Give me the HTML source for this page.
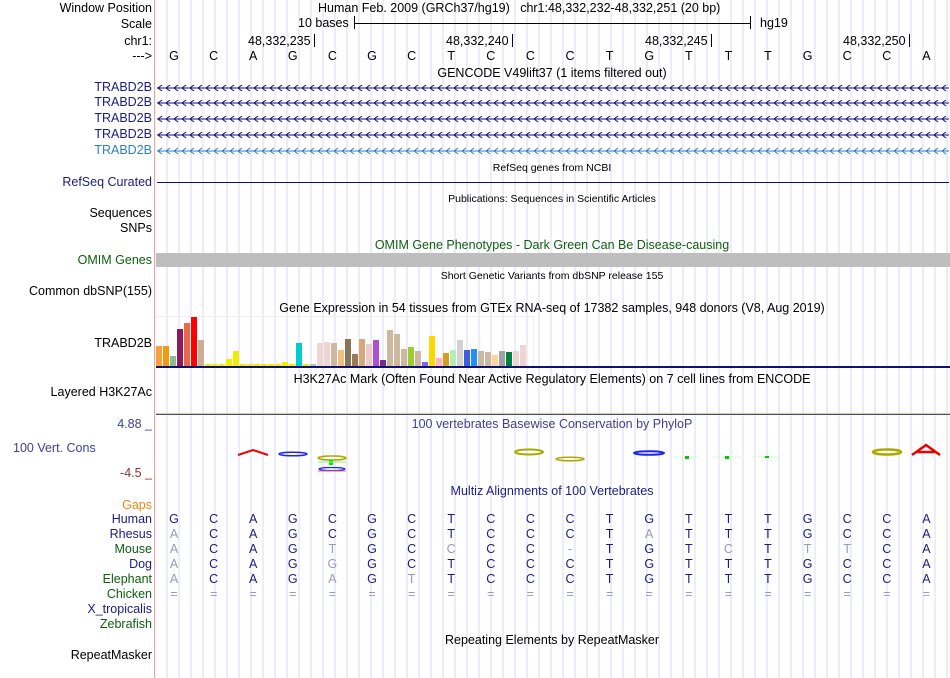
<!DOCTYPE html>
<html><head><meta charset="utf-8"><style>
html,body{margin:0;padding:0;width:950px;height:678px;overflow:hidden;background:#fff;}
body{position:relative;font-family:"Liberation Sans",sans-serif;font-size:12.5px;color:#000;}
#grid{position:absolute;left:156px;top:0;width:794px;height:678px;
background:repeating-linear-gradient(to right,transparent 0,transparent 10.5px,#d8d8f4 10.5px,#d8d8f4 11.5px,transparent 11.5px,transparent 12px);}
#red{position:absolute;left:154px;top:0;width:1px;height:678px;background:#f4a0a0;}
.t{position:absolute;white-space:nowrap;line-height:14px;}
.l{position:absolute;right:798px;white-space:nowrap;line-height:14px;text-align:right;}
.c{position:absolute;white-space:nowrap;line-height:14px;transform:translateX(-50%);}
.hl{position:absolute;left:157px;width:792px;}
.arr{position:absolute;left:157px;width:792px;height:8px;}
</style></head><body>
<div id="grid"></div><div id="red"></div>

<div class="l" style="top:1px">Window Position</div>
<div class="l" style="top:17px">Scale</div>
<div class="l" style="top:34px">chr1:</div>
<div class="l" style="top:49px">---&gt;</div>

<div class="t" style="left:318px;top:1px">Human Feb. 2009 (GRCh37/hg19)&nbsp;&nbsp; chr1:48,332,232-48,332,251 (20 bp)</div>
<div class="t" style="left:298px;top:16px">10 bases</div>
<div style="position:absolute;left:354px;top:16px;width:1px;height:13px;background:#000"></div>
<div style="position:absolute;left:354px;top:23px;width:397px;height:1px;background:#000"></div>
<div style="position:absolute;left:750px;top:16px;width:1px;height:13px;background:#000"></div>
<div class="t" style="left:760px;top:16px">hg19</div>

<div class="t" style="left:248px;top:34px">48,332,235</div><div style="position:absolute;left:314px;top:34px;width:1px;height:13px;background:#000"></div>
<div class="t" style="left:446px;top:34px">48,332,240</div><div style="position:absolute;left:512px;top:34px;width:1px;height:13px;background:#000"></div>
<div class="t" style="left:645px;top:34px">48,332,245</div><div style="position:absolute;left:711px;top:34px;width:1px;height:13px;background:#000"></div>
<div class="t" style="left:843px;top:34px">48,332,250</div><div style="position:absolute;left:909px;top:34px;width:1px;height:13px;background:#000"></div>
<div id="bases"></div>

<div class="c" style="left:552px;top:66px">GENCODE V49lift37 (1 items filtered out)</div>
<div class="l" style="top:80px;color:#1c1c80">TRABD2B</div>
<div class="l" style="top:95px;color:#1c1c80">TRABD2B</div>
<div class="l" style="top:111px;color:#1c1c80">TRABD2B</div>
<div class="l" style="top:127px;color:#1c1c80">TRABD2B</div>
<div class="l" style="top:143px;color:#2e7fc0">TRABD2B</div>
<svg id="arrs" style="position:absolute;left:0;top:0" width="950" height="160"></svg>

<div class="c" style="left:552px;top:161px;font-size:10.5px">RefSeq genes from NCBI</div>
<div class="l" style="top:175px;color:#1c1c80">RefSeq Curated</div>
<div class="hl" style="top:182px;height:1px;background:#10106e"></div>

<div class="c" style="left:552px;top:192px;font-size:10.5px">Publications: Sequences in Scientific Articles</div>
<div class="l" style="top:206px">Sequences</div>
<div class="l" style="top:221px">SNPs</div>
<div class="c" style="left:552px;top:238px;color:#0e5e0e">OMIM Gene Phenotypes - Dark Green Can Be Disease-causing</div>
<div class="l" style="top:253px;color:#0e5e0e">OMIM Genes</div>
<div style="position:absolute;left:156px;top:253px;width:794px;height:14px;background:#bebebe"></div>
<div class="c" style="left:552px;top:269px;font-size:10.5px">Short Genetic Variants from dbSNP release 155</div>
<div class="l" style="top:284px">Common dbSNP(155)</div>
<div class="c" style="left:552px;top:301px">Gene Expression in 54 tissues from GTEx RNA-seq of 17382 samples, 948 donors (V8, Aug 2019)</div>
<div class="l" style="top:336px">TRABD2B</div>
<div style="position:absolute;left:156px;top:316px;width:377px;height:50px;border-right:1px solid #eee;border-top:1px solid #eee"></div>
<div id="bars"></div>
<div class="hl" style="top:366px;height:2px;background:#10106e;left:156px;width:794px"></div>
<div class="c" style="left:552px;top:372px">H3K27Ac Mark (Often Found Near Active Regulatory Elements) on 7 cell lines from ENCODE</div>
<div class="l" style="top:385px">Layered H3K27Ac</div>
<div class="hl" style="top:413px;height:1px;background:#e8c890;left:156px;width:794px"></div>
<div class="hl" style="top:414px;height:1px;background:#405080;left:156px;width:794px"></div>

<div class="l" style="top:417px;color:#404090">4.88 _</div>
<div class="c" style="left:552px;top:417px;color:#404090">100 vertebrates Basewise Conservation by PhyloP</div>
<div class="t" style="left:13px;top:441px;color:#404090">100 Vert. Cons</div>
<div class="l" style="top:466px;color:#903030">-4.5 _</div>
<svg style="position:absolute;left:0;top:440px" width="950" height="40">
<path d="M238 15 L253 10 L268 15" stroke="#e00" stroke-width="2" fill="none"/>
<ellipse cx="293" cy="14" rx="14" ry="1.8" stroke="#22e" stroke-width="1.5" fill="none"/>
<ellipse cx="332" cy="18" rx="14" ry="2" stroke="#aa0" stroke-width="1.5" fill="none"/>
<rect x="329" y="20" width="4" height="5" fill="#0e0"/><line x1="318" y1="22" x2="346" y2="22" stroke="#8e8"/>
<ellipse cx="332" cy="29" rx="13" ry="1.5" stroke="#22e" stroke-width="1.2" fill="none"/>
<line x1="318" y1="31" x2="346" y2="31" stroke="#e66"/>
<ellipse cx="529" cy="12" rx="14" ry="2.5" stroke="#aa0" stroke-width="2" fill="none"/>
<ellipse cx="570" cy="19" rx="14" ry="1.8" stroke="#aa0" stroke-width="1.5" fill="none"/>
<ellipse cx="649" cy="13" rx="15" ry="1.8" stroke="#22e" stroke-width="2" fill="none"/>
<line x1="673" y1="17" x2="700" y2="17" stroke="#cfc"/><rect x="685" y="16" width="4" height="3" fill="#0c0"/>
<line x1="713" y1="17" x2="741" y2="17" stroke="#cfc"/><rect x="725" y="16" width="4" height="3" fill="#0c0"/>
<line x1="752" y1="17" x2="780" y2="17" stroke="#cfc"/><rect x="765" y="16" width="4" height="2" fill="#0c0"/>
<ellipse cx="887" cy="12" rx="14" ry="2.5" stroke="#aa0" stroke-width="2.5" fill="none"/>
<path d="M912 15 L926 5 L940 15 M917 12 L935 12" stroke="#e00" stroke-width="2.5" fill="none"/>
</svg>

<div class="c" style="left:552px;top:484px;color:#1c1c80">Multiz Alignments of 100 Vertebrates</div>
<div class="l" style="top:498px;color:#e88a10">Gaps</div>
<div class="l" style="top:512px;color:#1c1c80">Human</div>
<div class="l" style="top:527px;color:#1c1c80">Rhesus</div>
<div class="l" style="top:542px;color:#0e5e0e">Mouse</div>
<div class="l" style="top:557px;color:#1c1c80">Dog</div>
<div class="l" style="top:572px;color:#0e5e0e">Elephant</div>
<div class="l" style="top:587px;color:#0e5e0e">Chicken</div>
<div class="l" style="top:602px;color:#1c1c80">X_tropicalis</div>
<div class="l" style="top:617px;color:#0e5e0e">Zebrafish</div>
<div class="c" style="left:552px;top:633px">Repeating Elements by RepeatMasker</div>
<div class="l" style="top:648px">RepeatMasker</div>
<div id="aln"></div>

<script>
var X=function(i){return 174+i*39.6;};
var seq="GCAGCGCTCCCTGTTTGCCA";
var h="";
for(var i=0;i<20;i++)h+='<div class="c" style="left:'+X(i)+'px;top:49px">'+seq[i]+'</div>';
document.getElementById('bases').innerHTML=h;
// arrows
var s="";var ys=[88,103,119,135,151];
for(var r=0;r<5;r++){var col=r==4?'#2e7fc0':'#10106e';
s+='<line x1="157" y1="'+ys[r]+'" x2="949" y2="'+ys[r]+'" stroke="'+col+'" stroke-width="1"/>';
var p="";for(var x=158;x<948;x+=8)p+="M"+(x+4)+" "+(ys[r]-3)+" L"+x+" "+ys[r]+" L"+(x+4)+" "+(ys[r]+3)+" ";
s+='<path d="'+p+'" stroke="'+col+'" fill="none" stroke-width="1"/>';}
document.getElementById('arrs').innerHTML=s;
// bars
var tops=[135,135,165,84,66,48,117,192,192,192,175,150,192,192,192,192,192,192,183,192,126,192,192,126,123,126,147,114,159,114,129,117,177,87,99,144,138,150,183,105,171,156,147,117,147,144,150,153,162,150,153,150,132];
var cols=["#f4a040","#f09a10","#8fbc8f","#8b1a5a","#e8684a","#ff0000","#c8b098","#eeee00","#eeee00","#eeee00","#eeee00","#eeee00","#eeee00","#eeee00","#eeee00","#eeee00","#eeee00","#eeee00","#eeee00","#eeee00","#00cdcd","#eeee00","#a0c8d8","#eed5d2","#eed5d2","#d0b8a0","#f0c080","#8b7355","#9b7b55","#d4a878","#eecbc8","#b050d0","#7a2e8a","#cdb8a0","#cdb8a0","#cdb8a0","#9acd32","#cdb8a0","#7b68ee","#ffd700","#ffb6c1","#d4a020","#b4eeb4","#d3d3d3","#3a60e0","#1e90ff","#cdb8a0","#cdb8a0","#ffd39b","#a0a0a0","#008040","#eed5d2","#eed5d2"];
var b="";for(var i=0;i<tops.length;i++){var hh=Math.max(2,Math.round((195-tops[i])/3));
b+='<div style="position:absolute;left:'+(156+i*7)+'px;top:'+(366-hh)+'px;width:6px;height:'+hh+'px;background:'+cols[i]+'"></div>';}
document.getElementById('bars').innerHTML=b;
// alignment
var rows=["GCAGCGCTCCCTGTTTGCCA","ACAGCGCTCCCTATTTGCCA","ACAGTGCCCC-TGTCTTTCA","ACAGGGCTCCCTGTTTGCCA","ACAGAGTTCCCTGTTTGCCA","===================="];
var a="";for(var r=0;r<6;r++)for(var i=0;i<20;i++){var ch=rows[r][i];var g=(r==5)||ch!=seq[i];
a+='<div class="c" style="left:'+X(i)+'px;top:'+(512+r*15)+'px;color:'+(g?'#9898c0':'#1c1c80')+'">'+ch+'</div>';}
document.getElementById('aln').innerHTML=a;
</script>
</body></html>
